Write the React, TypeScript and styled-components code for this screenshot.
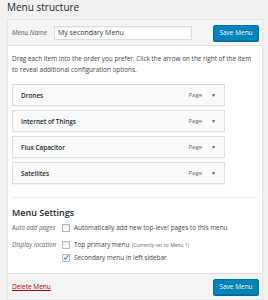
import { FunctionComponent } from "react";
import styled, { createGlobalStyle } from "styled-components";

const GlobalStyle = createGlobalStyle`
  html, body {
    margin: 0;
    padding: 0;
    background: #f1f1f1;
  }
  body {
    width: 268px;
    height: 300px;
    overflow: hidden;
    font-family: "Open Sans", "Liberation Sans", sans-serif;
    color: #444;
  }
`;

const Page = styled.div`
  display: flex;
  flex-direction: column;
  padding: 0 5px 0 7px;
`;

const Title = styled.h2`
  margin: 0;
  height: 19px;
  line-height: 15px;
  font-size: 10px;
  font-weight: 400;
  color: #23282d;
`;

const Panel = styled.div`
  display: flex;
  flex-direction: column;
  background: #fff;
  border: 1px solid #e5e5e5;
  box-shadow: 0 1px 1px rgba(0, 0, 0, 0.04);
`;

const Bar = styled.div<{ $top?: boolean }>`
  display: flex;
  align-items: center;
  height: 25px;
  padding: 0 3px 0 4px;
  background: #f5f5f5;
  ${(p) => (p.$top ? "border-bottom: 1px solid #dfdfdf;" : "border-top: 1px solid #dfdfdf;")}
`;

const NameLabel = styled.label`
  font-size: 6.5px;
  font-style: italic;
  color: #555;
  width: 42px;
`;

const NameInput = styled.div`
  width: 133px;
  height: 12px;
  border: 1px solid #ddd;
  background: #fff;
  box-shadow: inset 0 1px 2px rgba(0, 0, 0, 0.07);
  font-size: 7px;
  line-height: 12px;
  padding-left: 3px;
  color: #32373c;
`;

const SaveButton = styled.button`
  margin-left: auto;
  height: 16px;
  width: 46px;
  padding: 0;
  border: 1px solid #0073aa;
  border-radius: 2px;
  background: #0085ba;
  box-shadow: 0 1px 0 #006799;
  color: #fff;
  font-family: "Open Sans", "Liberation Sans", sans-serif;
  font-size: 6.5px;
  text-shadow: 0 -1px 1px #006799;
`;

const Body = styled.div`
  display: flex;
  flex-direction: column;
  padding: 7px 4px 11px 4px;
`;

const Hint = styled.p`
  margin: 0 0 9px;
  font-size: 6.4px;
  line-height: 11px;
  color: #444;
`;

const ItemList = styled.div`
  display: flex;
  flex-direction: column;
  gap: 4px;
  padding-bottom: 13px;
  border-bottom: 1px solid #eee;
`;

const Item = styled.div`
  display: flex;
  align-items: center;
  width: 213px;
  height: 22px;
  box-sizing: border-box;
  padding: 0 8px 0 8px;
  background: #fafafa;
  border: 1px solid #dfdfdf;
  box-shadow: 0 1px 1px rgba(0, 0, 0, 0.04);
`;

const ItemTitle = styled.span`
  font-size: 6.4px;
  font-weight: 600;
  color: #23282d;
`;

const ItemType = styled.span`
  margin-left: auto;
  font-size: 6px;
  color: #666;
`;

const Arrow = styled.span`
  margin-left: 9px;
  font-size: 5px;
  color: #555;
`;

const SettingsTitle = styled.h3`
  margin: 9px 0 4px;
  font-size: 9px;
  line-height: 12px;
  font-weight: 600;
  color: #23282d;
`;

const SettingRow = styled.div`
  display: flex;
  align-items: flex-start;
  & + & {
    margin-top: 8px;
  }
`;

const SettingLabel = styled.div`
  width: 50px;
  font-size: 6.3px;
  font-style: italic;
  color: #666;
  line-height: 9px;
`;

const Options = styled.div`
  display: flex;
  flex-direction: column;
  gap: 3px;
`;

const Option = styled.label`
  display: flex;
  align-items: center;
  gap: 4px;
  font-size: 6.4px;
  line-height: 9px;
  color: #444;
`;

const Box = styled.span`
  display: inline-flex;
  align-items: center;
  justify-content: center;
  width: 6px;
  height: 6px;
  border: 1px solid #b4b9be;
  background: #fff;
  box-shadow: inset 0 1px 2px rgba(0, 0, 0, 0.1);
`;

const Note = styled.span`
  font-size: 4.8px;
  color: #666;
  margin-left: 1px;
`;

const DeleteLink = styled.a`
  font-size: 6.5px;
  color: #a00;
  text-decoration: underline;
`;

type CheckProps = { checked?: boolean; children: React.ReactNode };

const Check: FunctionComponent<CheckProps> = ({ checked, children }) => (
  <Option>
    <Box>
      {checked && (
        <svg width="7" height="7" viewBox="0 0 7 7">
          <path d="M1 3.8 L2.8 5.4 L6 1.2" fill="none" stroke="#1e8cbe" strokeWidth="1.2" />
        </svg>
      )}
    </Box>
    <span>{children}</span>
  </Option>
);

const items = ["Drones", "Internet of Things", "Flux Capacitor", "Satellites"];

const App: FunctionComponent = () => {
  return (
    <Page>
      <GlobalStyle />
      <Title>Menu structure</Title>
      <Panel>
        <Bar $top>
          <NameLabel>Menu Name</NameLabel>
          <NameInput>My secondary Menu</NameInput>
          <SaveButton>Save Menu</SaveButton>
        </Bar>
        <Body>
          <Hint>
            Drag each item into the order you prefer. Click the arrow on the right of the item to
            reveal additional configuration options.
          </Hint>
          <ItemList>
            {items.map((name) => (
              <Item key={name}>
                <ItemTitle>{name}</ItemTitle>
                <ItemType>Page</ItemType>
                <Arrow>▼</Arrow>
              </Item>
            ))}
          </ItemList>
          <SettingsTitle>Menu Settings</SettingsTitle>
          <SettingRow>
            <SettingLabel>Auto add pages</SettingLabel>
            <Options>
              <Check>Automatically add new top-level pages to this menu</Check>
            </Options>
          </SettingRow>
          <SettingRow>
            <SettingLabel>Display location</SettingLabel>
            <Options>
              <Check>
                Top primary menu <Note>(Currently set to: Menu 1)</Note>
              </Check>
              <Check checked>Secondary menu in left sidebar</Check>
            </Options>
          </SettingRow>
        </Body>
        <Bar>
          <DeleteLink>Delete Menu</DeleteLink>
          <SaveButton>Save Menu</SaveButton>
        </Bar>
      </Panel>
    </Page>
  );
};

export default App;
